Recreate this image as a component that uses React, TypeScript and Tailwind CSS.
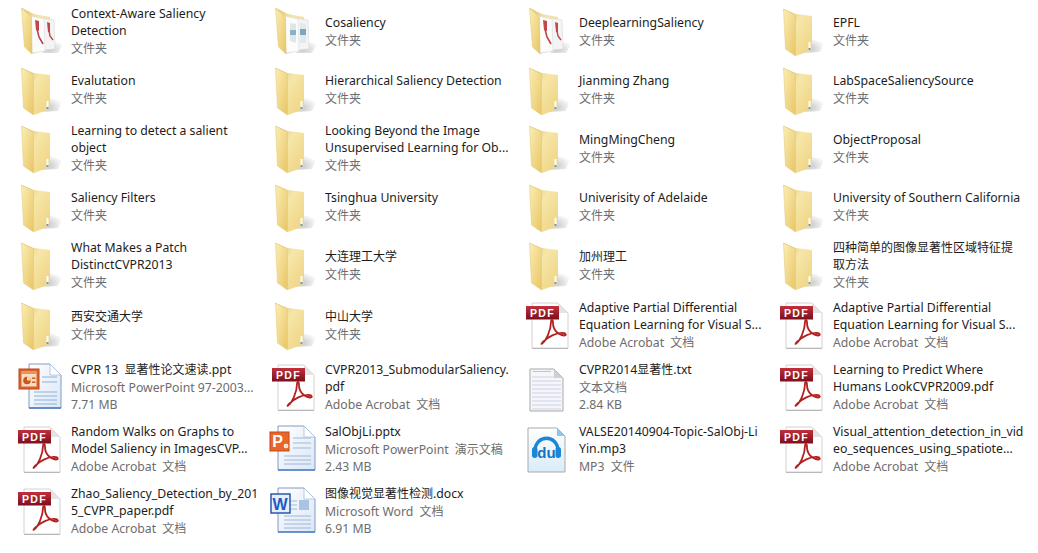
import React from 'react'

type IconKind = 'folder' | 'pdfFolder' | 'docFolder' | 'pdf' | 'ppt' | 'pptx' | 'word' | 'txt' | 'du'

type Item = {
  icon: IconKind
  lines: string[]
  meta: string[]
}

const FOLDER = ['文件夹']
const ACROBAT = ['Adobe Acrobat 文档']

function Defs() {
  return (
    <defs>
      <linearGradient id="flap" x1="0" y1="0" x2="1" y2="1">
        <stop offset="0" stopColor="#fbeeb4" />
        <stop offset="1" stopColor="#e8c566" />
      </linearGradient>
      <linearGradient id="back" x1="0" y1="0" x2="1" y2="1">
        <stop offset="0" stopColor="#d9c27a" />
        <stop offset="0.4" stopColor="#f6e6a8" />
        <stop offset="1" stopColor="#eed27f" />
      </linearGradient>
      <linearGradient id="page" x1="0" y1="0" x2="1" y2="1">
        <stop offset="0" stopColor="#ffffff" />
        <stop offset="1" stopColor="#dbe6f6" />
      </linearGradient>
      <linearGradient id="badge" x1="0" y1="0" x2="0" y2="1">
        <stop offset="0" stopColor="#c0313c" />
        <stop offset="1" stopColor="#7c0f1b" />
      </linearGradient>
      <linearGradient id="dupage" x1="0" y1="0" x2="0" y2="1">
        <stop offset="0" stopColor="#ffffff" />
        <stop offset="1" stopColor="#d8ecf9" />
      </linearGradient>
      <radialGradient id="shadow" cx="0.3" cy="0.7" r="0.8">
        <stop offset="0" stopColor="#b0b0b0" stopOpacity="0.7" />
        <stop offset="1" stopColor="#b0b0b0" stopOpacity="0" />
      </radialGradient>
    </defs>
  )
}

function Swoosh() {
  return (
    <path
      d="M22 46.5C26 44 31 33 31 25C31 22 33 22 33 26C33 33 38 38 44 38.5C47 38.5 46 36 43 36C36 35.5 28 40 23.5 44.5C21.5 46.5 21 47.5 22 46.5Z"
      fill="none"
      stroke="#b2201f"
      strokeWidth="1.8"
    />
  )
}

function FolderShape({ docs }: { docs?: 'pdf' | 'doc' }) {
  if (docs) {
    return (
      <>
        <path d="M36 38L52 40L46 50L30 50Z" fill="url(#shadow)" />
        <path d="M10 5L22 11L38 14L38 46L20 51Z" fill="url(#back)" />
        <path d="M30 15L42 17L43 46L31 47Z" fill="#f4f4f4" stroke="#d8d8d8" strokeWidth="0.6" />
        <path d="M19 13L32 16L33 48L20 50Z" fill="#fcfcfc" stroke="#dcdcdc" strokeWidth="0.6" />
        {docs === 'pdf' ? (
          <>
            <path d="M23 17L27 18L27 28L24 27Z" fill="#c0484a" />
            <path d="M25 26L27 34L31 41" fill="none" stroke="#b8474a" strokeWidth="1.6" />
            <path d="M35 19L38 20L38 29L36 29Z" fill="#c0484a" />
            <path d="M37 28L38 33L41 37" fill="none" stroke="#b8474a" strokeWidth="1.4" />
          </>
        ) : (
          <>
            <path d="M24 20L30 21L30 40L24 38Z" fill="#dfe6ea" />
            <rect x="24" y="27" width="6" height="5" fill="#8fb0c4" />
            <path d="M34 20L40 21L40 40L34 40Z" fill="#e2e8ec" />
            <rect x="34" y="26" width="6" height="6" fill="#7fa6bf" />
          </>
        )}
        <path d="M9.5 5L19.5 14L20 51L12.5 44Z" fill="url(#flap)" stroke="#e0c26c" strokeWidth="0.5" />
      </>
    )
  }
  return (
    <>
      <path d="M38 36L50 40L46 49L30 50Z" fill="url(#shadow)" />
      <path d="M9.5 6L22 11L38 13L38 47L22 53Z" fill="url(#back)" />
      <rect x="34.5" y="39" width="2" height="8" fill="#fdfdf5" />
      <rect x="34.5" y="45" width="2" height="2" fill="#5b9bd5" />
      <path d="M9.5 6L21.5 12L21.5 53L11.5 46Z" fill="url(#flap)" stroke="#e3c770" strokeWidth="0.5" />
    </>
  )
}

function PageLines({ x1, x2, ys, color }: { x1: number; x2: number; ys: number[]; color: string }) {
  return (
    <>
      {ys.map((y) => (
        <line key={y} x1={x1} x2={x2} y1={y} y2={y} stroke={color} strokeWidth="1" />
      ))}
    </>
  )
}

function BluePage({ x = 12 }: { x?: number }) {
  return (
    <>
      <path d={`M${x} 5L38 5L49 16L49 49L${x} 49Z`} fill="url(#page)" stroke="#7f9cc4" strokeWidth="1" />
      <path d="M38 5L38 16L49 16Z" fill="#ffffff" stroke="#a9bcd6" strokeWidth="0.8" />
      <path d={`M${x} 49L49 49`} stroke="#4f7fc0" strokeWidth="1.6" />
    </>
  )
}

function FileIcon({ kind }: { kind: IconKind }) {
  return (
    <svg width="56" height="56" viewBox="0 0 56 56" className="block shrink-0">
      <Defs />
      {kind === 'folder' && <FolderShape />}
      {kind === 'pdfFolder' && <FolderShape docs="pdf" />}
      {kind === 'docFolder' && <FolderShape docs="doc" />}
      {kind === 'pdf' && (
        <>
          <path d="M12 6L38 6L48 16L48 51L12 51Z" fill="#ffffff" stroke="#d2d2d2" strokeWidth="1" />
          <path d="M38 6L38 16L48 16Z" fill="#e4e4e4" />
          <path d="M12 51.5L48 51.5" stroke="#b8b8b8" strokeWidth="1.2" />
          <rect x="6" y="9" width="33" height="13.5" fill="url(#badge)" />
          <text
            x="22.5"
            y="19.8"
            textAnchor="middle"
            fill="#ffffff"
            fontSize="10.5"
            fontWeight="700"
            letterSpacing="1.4"
            fontFamily="'Liberation Sans', sans-serif"
          >
            PDF
          </text>
          <Swoosh />
        </>
      )}
      {kind === 'ppt' && (
        <>
          <BluePage x={17} />
          <PageLines x1={30} x2={45} ys={[18, 23]} color="#8eb0d8" />
          <PageLines x1={22} x2={45} ys={[33, 37, 41, 45]} color="#8eb0d8" />
          <rect x="7" y="10" width="20" height="20" fill="#d9622b" stroke="#b9481a" />
          <rect x="9.5" y="12.5" width="15" height="15" fill="#fbdcc2" />
          <rect x="9.5" y="12.5" width="15" height="2.5" fill="#e9925e" />
          <circle cx="15" cy="21.5" r="3.8" fill="#c9551f" />
          <path d="M15 21.5L15 17.7A3.8 3.8 0 0 1 18.8 21.5Z" fill="#f3e0a0" />
          <rect x="20" y="18.5" width="3.5" height="1.4" fill="#c9551f" />
          <rect x="20" y="22.5" width="3.5" height="1.4" fill="#c9551f" />
        </>
      )}
      {kind === 'pptx' && (
        <>
          <BluePage />
          <PageLines x1={27} x2={45} ys={[17, 22, 27]} color="#9db8dc" />
          <PageLines x1={18} x2={45} ys={[35, 39, 43]} color="#9db8dc" />
          <rect x="4" y="11" width="19" height="19" fill="#e9662a" stroke="#c6461a" />
          <text
            x="11.5"
            y="26"
            textAnchor="middle"
            fill="#ffffff"
            fontSize="16"
            fontWeight="700"
            fontFamily="'Liberation Sans', sans-serif"
          >
            P
          </text>
          <circle cx="20" cy="25" r="3" fill="#fbe0cf" stroke="#d9622b" />
        </>
      )}
      {kind === 'word' && (
        <>
          <BluePage />
          <rect x="33" y="17" width="10" height="10" fill="#a9c3e2" />
          <PageLines x1={25} x2={31} ys={[18, 22, 26]} color="#9db8dc" />
          <PageLines x1={18} x2={45} ys={[33, 37, 41, 45]} color="#9db8dc" />
          <rect x="5" y="11" width="19" height="19" fill="#e6eefa" stroke="#1d4fa6" strokeWidth="1.4" />
          <text
            x="14"
            y="26.5"
            textAnchor="middle"
            fill="#1a5cc0"
            fontSize="16"
            fontWeight="700"
            fontFamily="'Liberation Sans', sans-serif"
          >
            W
          </text>
        </>
      )}
      {kind === 'txt' && (
        <>
          <path d="M10 10L34 10L43 19L43 52L10 52Z" fill="#f5f6fa" stroke="#a8a8a8" strokeWidth="1" />
          <path d="M34 10L34 19L43 19Z" fill="#cfcfcf" />
          <PageLines x1={12} x2={41} ys={[18, 22, 26, 30, 34, 38, 42, 46, 50]} color="#cdd3e2" />
          <PageLines x1={13} x2={31} ys={[12.5]} color="#c4c4c4" />
        </>
      )}
      {kind === 'du' && (
        <>
          <path d="M8 7L37 7L45 15L45 51L8 51Z" fill="url(#dupage)" stroke="#a9a9a9" strokeWidth="1" />
          <path d="M37 7L37 15L45 15Z" fill="#8cc8ee" />
          <path d="M15 30C15 13 38 13 38 30" fill="none" stroke="#1c86d6" strokeWidth="3.4" />
          <rect x="12" y="26" width="5.5" height="11" rx="2.7" fill="#1c86d6" />
          <rect x="35.5" y="26" width="5.5" height="11" rx="2.7" fill="#1c86d6" />
          <text
            x="26.5"
            y="37"
            textAnchor="middle"
            fill="#1273c4"
            fontSize="15"
            fontWeight="700"
            fontFamily="'Liberation Sans', sans-serif"
          >
            du
          </text>
        </>
      )}
    </svg>
  )
}

const items: Item[] = [
  { icon: 'pdfFolder', lines: ['Context-Aware Saliency', 'Detection'], meta: FOLDER },
  { icon: 'docFolder', lines: ['Cosaliency'], meta: FOLDER },
  { icon: 'pdfFolder', lines: ['DeeplearningSaliency'], meta: FOLDER },
  { icon: 'folder', lines: ['EPFL'], meta: FOLDER },
  { icon: 'folder', lines: ['Evalutation'], meta: FOLDER },
  { icon: 'folder', lines: ['Hierarchical Saliency Detection'], meta: FOLDER },
  { icon: 'folder', lines: ['Jianming Zhang'], meta: FOLDER },
  { icon: 'folder', lines: ['LabSpaceSaliencySource'], meta: FOLDER },
  { icon: 'folder', lines: ['Learning to detect a salient', 'object'], meta: FOLDER },
  { icon: 'folder', lines: ['Looking Beyond the Image', 'Unsupervised Learning for Ob...'], meta: FOLDER },
  { icon: 'folder', lines: ['MingMingCheng'], meta: FOLDER },
  { icon: 'folder', lines: ['ObjectProposal'], meta: FOLDER },
  { icon: 'folder', lines: ['Saliency Filters'], meta: FOLDER },
  { icon: 'folder', lines: ['Tsinghua University'], meta: FOLDER },
  { icon: 'folder', lines: ['Univerisity of Adelaide'], meta: FOLDER },
  { icon: 'folder', lines: ['University of Southern California'], meta: FOLDER },
  { icon: 'folder', lines: ['What Makes a Patch', 'DistinctCVPR2013'], meta: FOLDER },
  { icon: 'folder', lines: ['大连理工大学'], meta: FOLDER },
  { icon: 'folder', lines: ['加州理工'], meta: FOLDER },
  { icon: 'folder', lines: ['四种简单的图像显著性区域特征提', '取方法'], meta: FOLDER },
  { icon: 'folder', lines: ['西安交通大学'], meta: FOLDER },
  { icon: 'folder', lines: ['中山大学'], meta: FOLDER },
  { icon: 'pdf', lines: ['Adaptive Partial Differential', 'Equation Learning for Visual S...'], meta: ACROBAT },
  { icon: 'pdf', lines: ['Adaptive Partial Differential', 'Equation Learning for Visual S...'], meta: ACROBAT },
  { icon: 'ppt', lines: ['CVPR 13 显著性论文速读.ppt'], meta: ['Microsoft PowerPoint 97-2003...', '7.71 MB'] },
  { icon: 'pdf', lines: ['CVPR2013_SubmodularSaliency.', 'pdf'], meta: ACROBAT },
  { icon: 'txt', lines: ['CVPR2014显著性.txt'], meta: ['文本文档', '2.84 KB'] },
  { icon: 'pdf', lines: ['Learning to Predict Where', 'Humans LookCVPR2009.pdf'], meta: ACROBAT },
  { icon: 'pdf', lines: ['Random Walks on Graphs to', 'Model Saliency in ImagesCVP...'], meta: ACROBAT },
  { icon: 'pptx', lines: ['SalObjLi.pptx'], meta: ['Microsoft PowerPoint 演示文稿', '2.43 MB'] },
  { icon: 'du', lines: ['VALSE20140904-Topic-SalObj-Li', 'Yin.mp3'], meta: ['MP3 文件'] },
  { icon: 'pdf', lines: ['Visual_attention_detection_in_vid', 'eo_sequences_using_spatiote...'], meta: ACROBAT },
  { icon: 'pdf', lines: ['Zhao_Saliency_Detection_by_201', '5_CVPR_paper.pdf'], meta: ACROBAT },
  { icon: 'word', lines: ['图像视觉显著性检测.docx'], meta: ['Microsoft Word 文档', '6.91 MB'] },
]

// Latin in the shot runs a bit wider than the CJK, so the runs get their own size
function Line({ text }: { text: string }) {
  const runs = text.split(/([\u4e00-\u9fff]+)/).filter(Boolean)
  return (
    <div className="h-[17px] text-[12px]">
      {runs.map((run, i) =>
        /[\u4e00-\u9fff]/.test(run) ? (
          <span key={i} className={i > 0 && runs[i - 1].endsWith(' ') ? 'pl-[3px]' : ''}>
            {run}
          </span>
        ) : (
          <span key={i} className="text-[12.25px]">
            {run}
          </span>
        ),
      )}
    </div>
  )
}

function Entry({ item }: { item: Item }) {
  return (
    <div className="flex items-center pl-3">
      <FileIcon kind={item.icon} />
      <div className="ml-[3px] whitespace-nowrap leading-[17px]">
        <div className="text-[#1c1c1c]">
          {item.lines.map((line) => (
            <Line key={line} text={line} />
          ))}
        </div>
        <div className="mt-[1px] text-[#6d6d6d]">
          {item.meta.map((line) => (
            <Line key={line} text={line} />
          ))}
        </div>
      </div>
    </div>
  )
}

export default function App() {
  return (
    <div className="h-[553px] w-[1038px] overflow-hidden bg-white pt-[2px] font-['Noto_Sans','Noto_Sans_CJK_SC',sans-serif]">
      <div className="grid grid-cols-[254px_254px_254px_254px] grid-rows-[58px_59px_58px_59px_58px_62px_62px_62px_62px]">
        {items.map((item, i) => (
          <Entry key={i} item={item} />
        ))}
      </div>
    </div>
  )
}
